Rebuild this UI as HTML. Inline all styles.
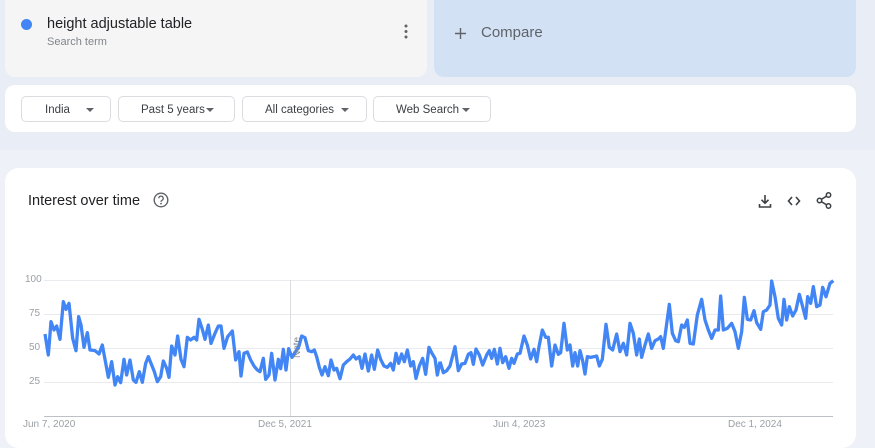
<!DOCTYPE html>
<html><head><meta charset="utf-8"><style>
html,body{margin:0;padding:0;width:875px;height:438px;overflow:hidden;background:#eef2f8;font-family:"Liberation Sans",Arial,sans-serif;}
.top{position:absolute;left:0;top:0;width:875px;height:150px;background:#e9eef6;}
.term{position:absolute;left:5px;top:-10px;width:422px;height:87px;background:#f5f5f5;border-radius:10px;}
.cmp{position:absolute;left:434px;top:-10px;width:422px;height:87px;background:#d3e1f5;border-radius:10px;}
.dot{position:absolute;left:21px;top:19px;width:11px;height:11px;border-radius:50%;background:#4285f4;}
.t1{position:absolute;left:47px;top:16px;font-size:14.5px;color:#202124;}
.t2{position:absolute;left:47px;top:36px;font-size:11px;color:#80868b;}
.filters{position:absolute;left:5px;top:85px;width:851px;height:47px;background:#fff;border-radius:10px;}
.btn{position:absolute;top:96px;height:26px;border:1px solid #dadce0;border-radius:5px;background:#fff;font-size:11.5px;color:#3c4043;line-height:26px;box-sizing:border-box;}
.btn span{position:absolute;top:0}
.tri{position:absolute;top:11px;width:0;height:0;border-left:4px solid transparent;border-right:4px solid transparent;border-top:4px solid #5f6368;}
.card{position:absolute;left:5px;top:168px;width:851px;height:280px;background:#fff;border-radius:14px;}
.title{position:absolute;left:28px;top:193px;font-size:14.5px;color:#202124;}
.ax{position:absolute;font-size:10px;color:#9aa0a6;}
</style></head><body>
<div class="top"></div>
<div class="term"></div>
<div class="dot"></div>
<div class="t1">height adjustable table</div>
<div class="t2">Search term</div>
<svg style="position:absolute;left:402px;top:24px" width="8" height="16"><circle cx="4" cy="2" r="1.5" fill="#5f6368"/><circle cx="4" cy="7.5" r="1.5" fill="#5f6368"/><circle cx="4" cy="13" r="1.5" fill="#5f6368"/></svg>
<div class="cmp"></div>
<svg style="position:absolute;left:454px;top:27px" width="13" height="13"><path d="M6.5 1v11M1 6.5h11" stroke="#5f6368" stroke-width="1.4"/></svg>
<div style="position:absolute;left:481px;top:24px;font-size:15px;color:#5f6368">Compare</div>
<div class="filters"></div>
<div class="btn" style="left:21px;width:90px"><span style="left:23px">India</span><i class="tri" style="left:64px"></i></div>
<div class="btn" style="left:118px;width:117px"><span style="left:22px">Past 5 years</span><i class="tri" style="left:87px"></i></div>
<div class="btn" style="left:242px;width:125px"><span style="left:22px">All categories</span><i class="tri" style="left:98px"></i></div>
<div class="btn" style="left:373px;width:118px"><span style="left:22px">Web Search</span><i class="tri" style="left:88px"></i></div>
<div class="card"></div>
<div class="title">Interest over time</div>
<svg style="position:absolute;left:153px;top:192px" width="16" height="16"><circle cx="8" cy="8" r="6.8" fill="none" stroke="#5f6368" stroke-width="1.4"/><path d="M5.8 6.3a2.2 2.2 0 1 1 3.2 2c-.7.4-1 .8-1 1.6" fill="none" stroke="#5f6368" stroke-width="1.3"/><circle cx="8" cy="11.6" r=".9" fill="#5f6368"/></svg>
<svg style="position:absolute;left:757px;top:193px" width="16" height="16"><path d="M8 2v8M4.5 6.8 8 10.2l3.5-3.4M2.5 11v3h11v-3" fill="none" stroke="#3c4043" stroke-width="1.6"/></svg>
<svg style="position:absolute;left:786px;top:193px" width="16" height="16"><path d="M6 4 2.5 8 6 12M10 4l3.5 4L10 12" fill="none" stroke="#3c4043" stroke-width="1.6"/></svg>
<svg style="position:absolute;left:815px;top:191px" width="18" height="19"><path d="M13.5 4 4.5 9.5l9 5.5" fill="none" stroke="#3c4043" stroke-width="1.6"/><circle cx="13.5" cy="4" r="2.2" fill="#fff" stroke="#3c4043" stroke-width="1.5"/><circle cx="4.5" cy="9.5" r="2.2" fill="#fff" stroke="#3c4043" stroke-width="1.5"/><circle cx="13.5" cy="15" r="2.2" fill="#fff" stroke="#3c4043" stroke-width="1.5"/></svg>
<svg style="position:absolute;left:0;top:0" width="875" height="438">
<g stroke="#e8eaed" stroke-width="1"><path d="M44 280.5H833M44 314.5H833M44 348.5H833M44 382.5H833"/></g>
<path d="M44 416.5H833" stroke="#bdc1c6" stroke-width="1"/>
<path d="M290.5 280V416" stroke="#dadce0" stroke-width="1"/>
<g transform="translate(0,260) scale(0.33333)" fill="none" stroke="#4285f4" stroke-width="3.3" stroke-linejoin="round">
<polyline vector-effect="non-scaling-stroke" points="135,222 145,285 153,185 162,210 170,198 180,238 190,125 198,148 207,130 218,235 228,272 236,170 243,195 252,262 262,218 270,270 285,272 297,282 307,255 325,352 335,305 345,375 353,350 362,368 372,298 380,345 390,300 400,360 408,367 418,335 427,367 437,310 445,290 455,315 463,335 472,365 482,350 490,303 500,325 507,352 515,258 525,285 533,228 543,298 552,320 562,232 572,240 582,232 590,240 597,178 607,208 615,238 625,195 633,250 645,220 655,198 663,198 672,265 683,230 697,213 707,300 717,275 723,348 732,280 742,276 752,300 762,318 772,330 780,335 790,295 797,358 807,345 815,280 825,360 835,298 842,326 850,268 858,330 866,266 876,292 885,278 897,258 905,228 915,233 925,272 935,275 943,270 950,290 958,322 966,345 975,320 985,347 993,300 1002,330 1010,325 1020,356 1030,315 1040,305 1050,297 1060,285 1068,297 1078,290 1086,325 1095,282 1105,333 1115,285 1123,328 1133,270 1142,298 1152,318 1162,322 1172,310 1180,330 1188,280 1196,310 1205,282 1213,305 1222,270 1232,318 1240,305 1248,355 1258,318 1268,295 1277,343 1287,262 1296,280 1305,295 1312,345 1320,305"/>
</g>
<g transform="translate(440,260) scale(0.33333)" fill="none" stroke="#4285f4" stroke-width="3.3" stroke-linejoin="round">
<polyline vector-effect="non-scaling-stroke" points="0,305 10,338 20,332 30,318 45,260 55,332 65,312 75,310 85,283 93,278 100,313 108,267 118,285 128,315 140,285 148,272 155,295 163,268 172,312 180,265 188,308 197,290 207,325 215,295 222,310 232,282 240,280 252,228 262,255 272,297 282,268 290,305 297,260 307,210 317,232 325,232 335,318 345,255 355,283 362,278 372,190 382,270 390,255 398,318 405,278 413,318 420,272 428,302 435,342 442,290 452,292 462,290 470,288 478,318 487,298 498,193 508,262 518,270 530,222 540,275 550,250 560,285 570,190 580,220 590,285 598,237 605,292 615,255 625,222 635,265 645,242 655,237 662,230 670,265 688,133 697,220 707,242 715,245 725,195 733,202 742,180 750,250 760,252 772,165 785,118 795,180 805,210 815,235 825,210 835,210 842,108 850,210 862,205 875,190 885,215 895,265 905,215 913,112 922,178 932,180 942,152 950,188 962,208 970,155 980,150 990,135 995,63 1005,110 1015,175 1025,195 1032,118 1040,180 1048,140 1058,168 1068,150 1078,103 1088,140 1097,175 1103,110 1112,130 1120,80 1130,140 1140,135 1148,82 1158,110 1170,70 1180,62"/>
</g>
<text x="300" y="358" transform="rotate(-90 300 358)" font-family="Liberation Sans,sans-serif" font-size="10" fill="#80868b">Note</text>
</svg>
<div class="ax" style="left:25px;top:274px">100</div>
<div class="ax" style="left:29px;top:308px">75</div>
<div class="ax" style="left:29px;top:342px">50</div>
<div class="ax" style="left:29px;top:376px">25</div>
<div class="ax" style="left:23px;top:419px">Jun 7, 2020</div>
<div class="ax" style="left:258px;top:419px">Dec 5, 2021</div>
<div class="ax" style="left:493px;top:419px">Jun 4, 2023</div>
<div class="ax" style="left:728px;top:419px">Dec 1, 2024</div>
</body></html>
